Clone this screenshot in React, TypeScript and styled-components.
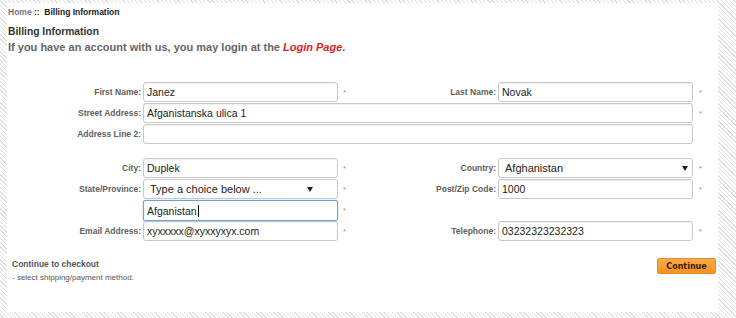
import React from 'react';
import styled, { createGlobalStyle } from 'styled-components';

const Global = createGlobalStyle`
  html, body { margin: 0; padding: 0; }
  body {
    width: 736px;
    height: 318px;
    overflow: hidden;
    font-family: "Liberation Sans", Arial, sans-serif;
    background: repeating-linear-gradient(45deg, #ffffff 0 2px, #e0e0e0 2px 3px);
  }
`;

const Panel = styled.div`
  margin: 3px 18px 0 7px;
  height: 309px;
  background: #fff;
  box-sizing: border-box;
  padding-top: 4px;
  display: flex;
  flex-direction: column;
`;

const Header = styled.div`
  padding-left: 1px;
`;

const Crumbs = styled.div`
  font-size: 8.5px;
  line-height: 11px;
  font-weight: bold;
  color: #222;
`;

const CrumbLink = styled.span`
  color: #777;
`;

const Title = styled.div`
  margin-top: 7px;
  font-size: 10.3px;
  line-height: 13px;
  font-weight: bold;
  color: #333;
`;

const LoginLine = styled.div`
  margin-top: 3px;
  font-size: 11px;
  line-height: 13px;
  font-weight: bold;
  color: #666;
`;

const LoginLink = styled.a`
  color: #e31b1b;
  font-style: italic;
  text-decoration: none;
`;

const Form = styled.div`
  margin-top: 28px;
  display: grid;
  grid-template-columns: 135px 196px 22px 137px 196px 25px;
  grid-template-rows: repeat(3, 20px) 12px repeat(4, 20px);
  row-gap: 1px;
`;

const Label = styled.label<{ $col: number }>`
  grid-column: ${(p) => p.$col};
  display: flex;
  align-items: center;
  justify-content: flex-end;
  padding-right: 1px;
  padding-bottom: 1px;
  font-size: 8.5px;
  font-weight: bold;
  color: #606060;
  white-space: nowrap;
`;

const Field = styled.input<{ $col: string }>`
  grid-column: ${(p) => p.$col};
  margin: 0 0 0 1px;
  height: 20px;
  box-sizing: border-box;
  border: 1px solid #c8c8c8;
  border-radius: 3px;
  box-shadow: inset 0 1px 1px rgba(0, 0, 0, 0.06);
  padding: 0 4px 0 3px;
  font-family: "Liberation Sans", Arial, sans-serif;
  font-size: 10.5px;
  color: #222;
  background: #fff;
  outline: none;
`;

const FocusField = styled.div<{ $col: string }>`
  grid-column: ${(p) => p.$col};
  margin-left: 1px;
  height: 21px;
  box-sizing: border-box;
  border: 1px solid #66a3dc;
  border-radius: 2px;
  box-shadow: 0 0 2px rgba(102, 163, 220, 0.6);
  padding: 0 3px;
  display: flex;
  align-items: center;
  font-size: 10.5px;
  color: #222;
  background: #fff;
`;

const Caret = styled.span`
  display: inline-block;
  width: 1px;
  height: 12px;
  background: #000;
  margin-left: 1px;
`;

const SelectBox = styled.div<{ $col: string }>`
  grid-column: ${(p) => p.$col};
  margin-left: 1px;
  position: relative;
  height: 20px;
`;

const Select = styled.select`
  appearance: none;
  -webkit-appearance: none;
  width: 100%;
  height: 20px;
  box-sizing: border-box;
  border: 1px solid #c8c8c8;
  border-radius: 3px;
  background: #fff;
  padding: 0 0 0 6px;
  font-family: "Liberation Sans", Arial, sans-serif;
  font-size: 11px;
  color: #222;
  outline: none;
`;

const Arrow = styled.svg<{ $right: number }>`
  position: absolute;
  top: 8px;
  right: ${(p) => p.$right}px;
  width: 6px;
  height: 5px;
  pointer-events: none;
`;

const Star = styled.span<{ $col: number; $pad: number; $grey?: boolean }>`
  grid-column: ${(p) => p.$col};
  display: flex;
  align-items: center;
  padding-left: ${(p) => p.$pad}px;
  font-size: 8px;
  color: ${(p) => (p.$grey ? '#999' : '#e57373')};
`;

const Spacer = styled.div`
  grid-column: 1 / -1;
`;

const Footer = styled.div`
  margin-top: 17px;
  display: flex;
  justify-content: space-between;
  align-items: flex-start;
  padding: 0 2px 0 5px;
`;

const NextStep = styled.div`
  color: #555;
  line-height: 13px;
`;

const NextTitle = styled.div`
  font-size: 8.5px;
  font-weight: bold;
`;

const NextHint = styled.div`
  font-size: 8px;
`;

const Button = styled.button`
  width: 59px;
  height: 16px;
  padding: 0;
  border: 1px solid #e8892a;
  border-radius: 2px;
  background: linear-gradient(#fbab4a, #f6911f);
  font-family: "DejaVu Sans", Verdana, sans-serif;
  font-weight: bold;
  font-size: 8px;
  color: #3a1d00;
  cursor: pointer;
`;

const SelectArrow = ({ right }: { right: number }) => (
  <Arrow $right={right} viewBox="0 0 6 5">
    <path d="M0 0 H6 L3 5 Z" fill="#222" />
  </Arrow>
);

export default function App() {
  return (
    <>
      <Global />
      <Panel>
        <Header>
          <Crumbs>
            <CrumbLink>Home</CrumbLink> ::&nbsp; Billing Information
          </Crumbs>
          <Title>Billing Information</Title>
          <LoginLine>
            If you have an account with us, you may login at the <LoginLink href="#">Login Page</LoginLink>.
          </LoginLine>
        </Header>
        <Form>
          <Label $col={1}>First Name:</Label>
          <Field $col="2" defaultValue="Janez" />
          <Star $col={3} $pad={5}>*</Star>
          <Label $col={4}>Last Name:</Label>
          <Field $col="5" defaultValue="Novak" />
          <Star $col={6} $pad={6}>*</Star>

          <Label $col={1}>Street Address:</Label>
          <Field $col="2 / 6" defaultValue="Afganistanska ulica 1" />
          <Star $col={6} $pad={6} $grey>*</Star>

          <Label $col={1}>Address Line 2:</Label>
          <Field $col="2 / 6" defaultValue="" />

          <Spacer />

          <Label $col={1}>City:</Label>
          <Field $col="2" defaultValue="Duplek" />
          <Star $col={3} $pad={5}>*</Star>
          <Label $col={4}>Country:</Label>
          <SelectBox $col="5">
            <Select defaultValue="af">
              <option value="af">Afghanistan</option>
            </Select>
            <SelectArrow right={5} />
          </SelectBox>
          <Star $col={6} $pad={6}>*</Star>

          <Label $col={1}>State/Province:</Label>
          <SelectBox $col="2">
            <Select defaultValue="">
              <option value="">Type a choice below ...</option>
            </Select>
            <SelectArrow right={25} />
          </SelectBox>
          <Star $col={3} $pad={5}>*</Star>
          <Label $col={4}>Post/Zip Code:</Label>
          <Field $col="5" defaultValue="1000" />
          <Star $col={6} $pad={6}>*</Star>

          <FocusField $col="2">
            Afganistan
            <Caret />
          </FocusField>
          <Star $col={3} $pad={5}>*</Star>

          <Label $col={1}>Email Address:</Label>
          <Field $col="2" defaultValue="xyxxxxx@xyxxyxyx.com" />
          <Star $col={3} $pad={5}>*</Star>
          <Label $col={4}>Telephone:</Label>
          <Field $col="5" defaultValue="03232323232323" />
          <Star $col={6} $pad={6}>*</Star>
        </Form>
        <Footer>
          <NextStep>
            <NextTitle>Continue to checkout</NextTitle>
            <NextHint>- select shipping/payment method.</NextHint>
          </NextStep>
          <Button>Continue</Button>
        </Footer>
      </Panel>
    </>
  );
}
